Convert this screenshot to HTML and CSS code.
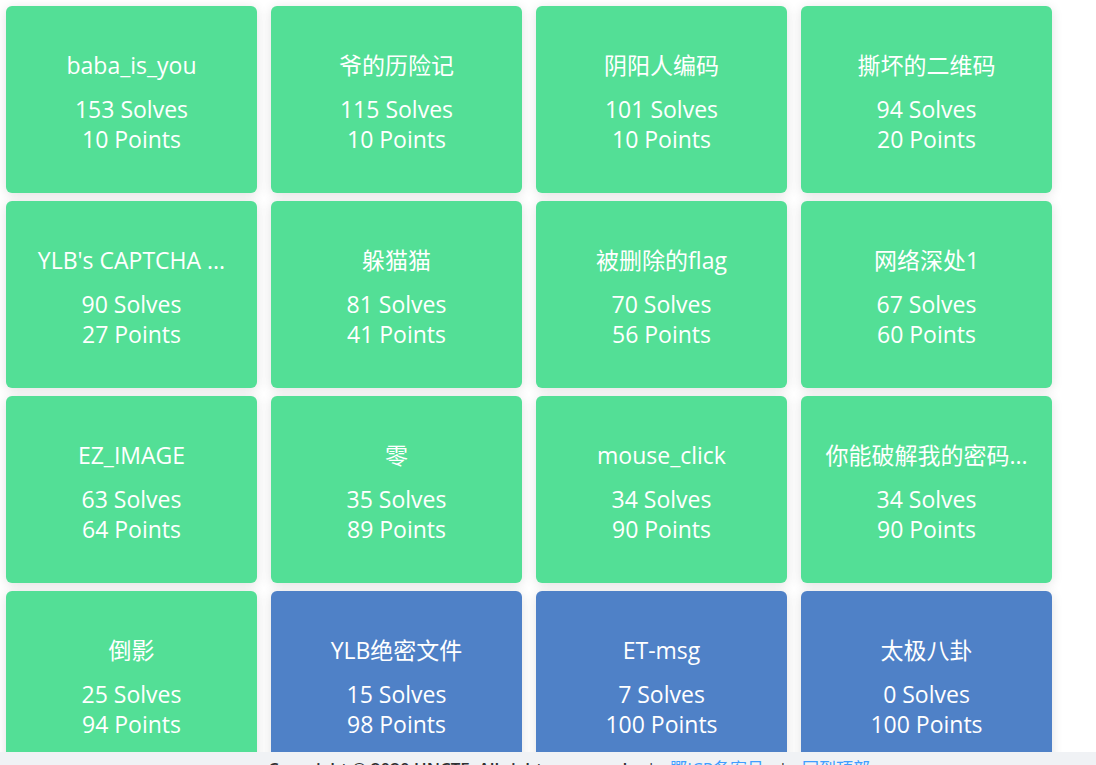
FILE: index.html
```html
<!DOCTYPE html>
<html lang="zh-CN">
<head>
<meta charset="utf-8">
<title>Challenges</title>
<link rel="stylesheet" href="styles.css">
</head>
<body>
<div class="page">
  <main class="main">
    <div class="grid">
      <div class="card solved"><div class="title">baba_is_you</div><div class="meta">153 Solves</div><div class="meta">10 Points</div></div>
      <div class="card solved"><div class="title">爷的历险记</div><div class="meta">115 Solves</div><div class="meta">10 Points</div></div>
      <div class="card solved"><div class="title">阴阳人编码</div><div class="meta">101 Solves</div><div class="meta">10 Points</div></div>
      <div class="card solved"><div class="title">撕坏的二维码</div><div class="meta">94 Solves</div><div class="meta">20 Points</div></div>

      <div class="card solved"><div class="title">YLB's CAPTCHA ...</div><div class="meta">90 Solves</div><div class="meta">27 Points</div></div>
      <div class="card solved"><div class="title">躲猫猫</div><div class="meta">81 Solves</div><div class="meta">41 Points</div></div>
      <div class="card solved"><div class="title">被删除的flag</div><div class="meta">70 Solves</div><div class="meta">56 Points</div></div>
      <div class="card solved"><div class="title">网络深处1</div><div class="meta">67 Solves</div><div class="meta">60 Points</div></div>

      <div class="card solved"><div class="title">EZ_IMAGE</div><div class="meta">63 Solves</div><div class="meta">64 Points</div></div>
      <div class="card solved"><div class="title">零</div><div class="meta">35 Solves</div><div class="meta">89 Points</div></div>
      <div class="card solved"><div class="title">mouse_click</div><div class="meta">34 Solves</div><div class="meta">90 Points</div></div>
      <div class="card solved"><div class="title">你能破解我的密码...</div><div class="meta">34 Solves</div><div class="meta">90 Points</div></div>

      <div class="card solved"><div class="title">倒影</div><div class="meta">25 Solves</div><div class="meta">94 Points</div></div>
      <div class="card open"><div class="title">YLB绝密文件</div><div class="meta">15 Solves</div><div class="meta">98 Points</div></div>
      <div class="card open"><div class="title">ET-msg</div><div class="meta">7 Solves</div><div class="meta">100 Points</div></div>
      <div class="card open"><div class="title">太极八卦</div><div class="meta">0 Solves</div><div class="meta">100 Points</div></div>
    </div>
  </main>
  <footer class="footer">
    <span class="copy">Copyright © 2020 UNCTF. All rights reserved.</span>
    <span class="sep">|</span>
    <a class="link" href="#">鄂ICP备案号</a>
    <span class="sep">|</span>
    <a class="link" href="#">回到顶部</a>
  </footer>
</div>
</body>
</html>
```

FILE: styles.css
```css
html, body {
  margin: 0;
  padding: 0;
  background: #ffffff;
}

.page {
  width: 1096px;
  height: 765px;
  overflow: hidden;
  display: flex;
  flex-direction: column;
  font-family: "Open Sans", "Noto Sans CJK SC", sans-serif;
}

.main {
  height: 752px;
  flex: none;
  overflow: hidden;
  background: #ffffff;
}

.grid {
  display: grid;
  grid-template-columns: repeat(4, 251px);
  grid-auto-rows: 187px;
  column-gap: 14px;
  row-gap: 8px;
  padding: 6px;
}

.card {
  border-radius: 6px;
  box-shadow: 0 2px 12px rgba(0, 0, 0, 0.12);
  color: #ffffff;
  text-align: center;
  padding: 44px 22px 0;
  box-sizing: border-box;
}

.solved {
  background: #53df96;
}

.open {
  background: #4f81c7;
}

.title {
  font-size: 23px;
  line-height: 30px;
  white-space: nowrap;
  overflow: hidden;
  margin-bottom: 14px;
}

.meta {
  font-size: 23px;
  line-height: 30px;
}

.footer {
  flex: none;
  height: 40px;
  background: #f0f2f5;
  box-sizing: border-box;
  padding: 6px 0 0 42px;
  text-align: center;
  font-size: 17px;
  line-height: 22px;
  color: #303133;
  white-space: nowrap;
}

.copy {
  font-weight: 600;
}

.sep {
  margin: 0 10px;
}

.link {
  color: #409eff;
  text-decoration: none;
}
```
